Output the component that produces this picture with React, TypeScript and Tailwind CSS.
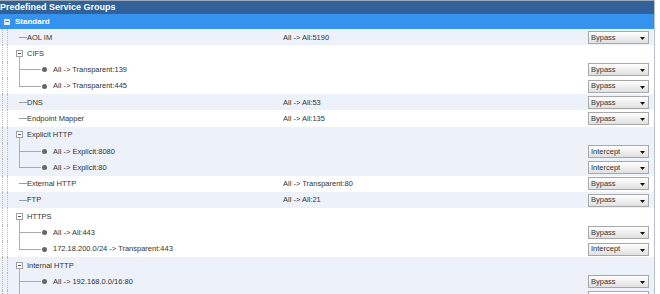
import React from "react";

type Row = {
  kind: "leaf" | "group" | "child";
  label: string;
  rule?: string;
  action?: string;
  band: boolean;
  last?: boolean;
};

const rows: Row[] = [
  { kind: "leaf", label: "AOL IM", rule: "All -> All:5190", action: "Bypass", band: true },
  { kind: "group", label: "CIFS", band: false },
  { kind: "child", label: "All -> Transparent:139", action: "Bypass", band: false },
  { kind: "child", label: "All -> Transparent:445", action: "Bypass", band: false, last: true },
  { kind: "leaf", label: "DNS", rule: "All -> All:53", action: "Bypass", band: true },
  { kind: "leaf", label: "Endpoint Mapper", rule: "All -> All:135", action: "Bypass", band: false },
  { kind: "group", label: "Explicit HTTP", band: true },
  { kind: "child", label: "All -> Explicit:8080", action: "Intercept", band: true },
  { kind: "child", label: "All -> Explicit:80", action: "Intercept", band: true, last: true },
  { kind: "leaf", label: "External HTTP", rule: "All -> Transparent:80", action: "Bypass", band: false },
  { kind: "leaf", label: "FTP", rule: "All -> All:21", action: "Bypass", band: true },
  { kind: "group", label: "HTTPS", band: false },
  { kind: "child", label: "All -> All:443", action: "Bypass", band: false },
  { kind: "child", label: "172.18.200.0/24 -> Transparent:443", action: "Intercept", band: false, last: true },
  { kind: "group", label: "Internal HTTP", band: true },
  { kind: "child", label: "All -> 192.168.0.0/16:80", action: "Bypass", band: true },
  { kind: "child", label: "", action: "Bypass", band: true, last: true },
];

function ActionSelect({ value }: { value: string }) {
  return (
    <div className="flex items-center justify-between w-[61px] h-[13px] border border-[#a8a8a8] bg-gradient-to-b from-white to-[#e0e0e0] pl-[2px] pr-[3px] text-[7.5px] text-[#333]">
      <span>{value}</span>
      <svg width="5" height="3" viewBox="0 0 5 3" className="mt-[2px]">
        <path d="M0 0h5L2.5 3z" fill="#111" />
      </svg>
    </div>
  );
}

// connector column: vertical line sits at x=19, 3px into the column
function Connector({ row }: { row: Row }) {
  if (row.kind === "leaf") {
    return (
      <div className="w-[11px] flex flex-col justify-center">
        <div className="ml-[3px] w-[8px] h-px bg-[#9c9c9c]" />
      </div>
    );
  }
  if (row.kind === "group") {
    return (
      <div className="w-[11px] flex flex-col">
        <div className="flex-1" />
        <div className="w-[7px] h-[7px] border border-[#a0a0a0] bg-white flex items-center justify-center">
          <div className="w-[3px] h-px bg-[#555]" />
        </div>
        <div className="flex-1 ml-[3px] w-px bg-[#b0b0b0]" />
      </div>
    );
  }
  return (
    <div className="w-[26px] flex flex-col">
      <div className="flex-1 ml-[3px] w-px bg-[#b0b0b0]" />
      <div className="ml-[3px] w-[22px] h-px bg-[#a8a8a8]" />
      <div className={row.last ? "flex-1" : "flex-1 ml-[3px] w-px bg-[#b0b0b0]"} />
    </div>
  );
}

function TreeCell({ row }: { row: Row }) {
  return (
    <div className="w-[283px] self-stretch flex">
      <div className="w-[2px]" />
      <div className="w-[5px] border-l border-dotted border-[#b8b8b8]" />
      <div className="w-[9px] border-l border-dotted border-[#b8b8b8]" />
      <Connector row={row} />
      {row.kind === "child" && (
        <div className="self-center mr-[6px] w-[5px] h-[5px] rounded-full bg-[#666]" />
      )}
      <span className="self-center">{row.label}</span>
    </div>
  );
}

export default function App() {
  return (
    <div className="w-[655px] bg-white border-r border-[#b8c2cf] text-[7.5px] text-[#333] [font-family:'Liberation_Sans',Arial,sans-serif] overflow-hidden">
      <div className="h-[14px] bg-[#30619a] border-t border-[#9aa8b8] flex items-center text-[9px] font-bold text-white">
        Predefined Service Groups
      </div>
      <div className="h-[15px] bg-[#3592ef] flex items-center text-[8px] font-bold text-white">
        <span className="ml-[4px] mr-[5px] w-[6px] h-[6px] bg-[#dfe9f7] flex items-center justify-center">
          <span className="w-[4px] h-px bg-[#3592ef]" />
        </span>
        Standard
      </div>
      {rows.map((row, i) => (
        <div
          key={i}
          className={
            row.band
              ? "h-[16.3px] flex items-center bg-[#edf1fa]"
              : "h-[16.3px] flex items-center bg-white"
          }
        >
          <TreeCell row={row} />
          <div className="flex-1">{row.rule ?? ""}</div>
          <div className="w-[66px] flex">
            {row.action && <ActionSelect value={row.action} />}
          </div>
        </div>
      ))}
    </div>
  );
}
